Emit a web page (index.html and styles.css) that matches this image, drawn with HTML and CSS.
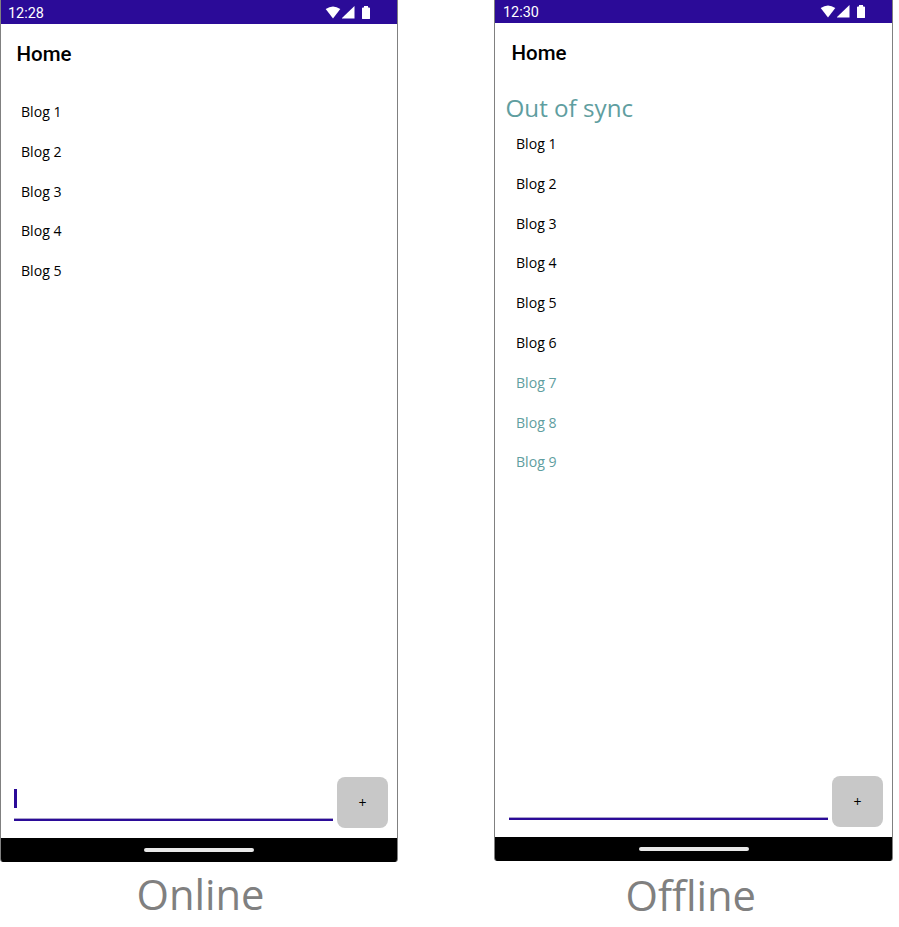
FILE: index.html
```html
<!DOCTYPE html>
<html lang="en">
<head>
<meta charset="utf-8">
<title>Blogs</title>
<link rel="stylesheet" href="styles.css">
</head>
<body>
<main class="stage">
  <section class="device">
    <div class="phone">
      <header class="status">
        <span class="time">12:28</span>
        <svg class="indicators" width="46" height="14" viewBox="0 0 46 14" fill="#fff"><path d="M-.3 3Q7 -2.2 14.3 3L7 12.5Z"/><path d="M16 12.5V12L28.5 0V12.5Z"/><path d="M36 2.2Q36 1.5 37 1.5H38V0H42V1.5H43Q44 1.5 44 2.2V12.5Q44 13 43 13H37Q36 13 36 12.5Z"/></svg>
      </header>
      <h1 class="title">Home</h1>
      <ul class="blogs">
        <li>Blog 1</li><li>Blog 2</li><li>Blog 3</li><li>Blog 4</li><li>Blog 5</li>
      </ul>
      <div class="composer">
        <div class="field"><span class="caret"></span></div>
        <button class="add">+</button>
      </div>
      <footer class="nav"><span class="handle"></span></footer>
    </div>
    <p class="caption">Online</p>
  </section>
  <section class="device offline">
    <div class="phone">
      <header class="status">
        <span class="time">12:30</span>
        <svg class="indicators" width="46" height="14" viewBox="0 0 46 14" fill="#fff"><path d="M-.3 3Q7 -2.2 14.3 3L7 12.5Z"/><path d="M16 12.5V12L28.5 0V12.5Z"/><path d="M36 2.2Q36 1.5 37 1.5H38V0H42V1.5H43Q44 1.5 44 2.2V12.5Q44 13 43 13H37Q36 13 36 12.5Z"/></svg>
      </header>
      <h1 class="title">Home</h1>
      <p class="notice">Out of sync</p>
      <ul class="blogs">
        <li>Blog 1</li><li>Blog 2</li><li>Blog 3</li><li>Blog 4</li><li>Blog 5</li><li>Blog 6</li>
        <li class="pending">Blog 7</li><li class="pending">Blog 8</li><li class="pending">Blog 9</li>
      </ul>
      <div class="composer">
        <div class="field"></div>
        <button class="add">+</button>
      </div>
      <footer class="nav"><span class="handle"></span></footer>
    </div>
    <p class="caption">Offline</p>
  </section>
</main>
</body>
</html>
```
FILE: styles.css
```css
* { box-sizing: border-box; margin: 0; padding: 0; }
body { background: #fff; font-family: "Open Sans", sans-serif; color: #000; overflow: hidden; }
.stage { display: flex; gap: 96px; height: 927px; }
.device { width: 398px; }
.offline { width: 399px; }
.phone {
  display: flex; flex-direction: column; height: 862px; overflow: hidden;
  border: solid #808080; border-width: 0 1px; border-radius: 0 0 3px 3px;
}
.offline .phone { height: 861px; }
.status {
  display: flex; justify-content: space-between; flex: none; height: 24px;
  padding: 0 25px 0 7px; background: #2b0b98; color: #fff;
}
.offline .status { height: 23px; padding: 0 25px 0 8px; }
.time { font: 14.4px/28px Roboto, sans-serif; }
.offline .time { line-height: 26px; }
.indicators { margin-top: 6px; overflow: visible; }
.offline .indicators { margin-top: 5px; }
.title { padding-left: 15.5px; font: 500 20.5px/60px Roboto, sans-serif; height: 68px; }
.offline .title { padding-left: 16.5px; }
.notice { height: 33px; padding-left: 10.5px; font-size: 24.2px; line-height: 34px; color: #5f9ea0; }
.blogs { list-style: none; padding-left: 20px; }
.offline .blogs { padding-left: 21px; }
.blogs li { height: 39.8px; font-size: 14.1px; line-height: 39.8px; }
.pending { color: #5f9ea0; }
.composer { display: flex; gap: 4px; height: 61px; margin-top: auto; padding: 0 9px 0 13px; }
.offline .composer { padding-left: 14px; }
.field { width: 319px; height: 44px; padding-top: 12px; border-bottom: 2px solid #2b0b98; box-shadow: inset 0 -1px #aaa2cc; }
.caret { display: block; width: 3px; height: 19px; background: #2b0b98; }
.add { width: 51px; height: 51px; border: 0; border-radius: 8px; background: #c8c8c8; font: 14px/51px "Open Sans", sans-serif; color: #000; }
.nav { display: flex; align-items: center; justify-content: center; flex: none; height: 24px; background: #000; }
.handle { width: 110px; height: 4px; border-radius: 2px; background: #e8e8e8; }
.caption { padding-left: 136.5px; font-size: 41.7px; line-height: 64px; color: #808080; }
.offline .caption { padding-left: 131.5px; line-height: 68px; }
```
